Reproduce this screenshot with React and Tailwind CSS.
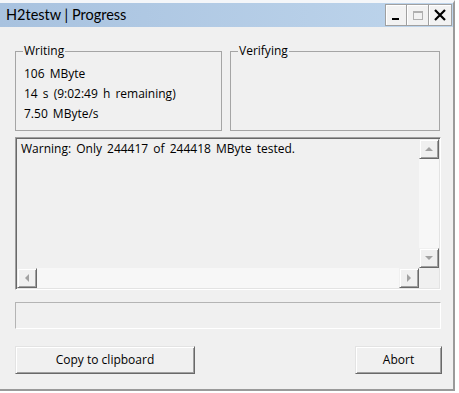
import React from "react";

// small gray triangle used by the scrollbar buttons
const Arrow = ({ dir }) => {
  const pts = {
    up: "0,4 4,0 8,4",
    down: "0,0 8,0 4,4",
    left: "4,0 4,8 0,4",
    right: "0,0 0,8 4,4",
  }[dir];
  const vertical = dir === "up" || dir === "down";
  return (
    <svg width={vertical ? 8 : 4} height={vertical ? 4 : 8} className="block">
      <polygon points={pts} fill="#a2a2a2" />
    </svg>
  );
};

const ScrollButton = ({ dir }) => (
  <div className="w-[20px] h-[20px] flex items-center justify-center bg-[#f0f0f0] border border-t-[#f0f0f0] border-l-[#f0f0f0] border-b-[#696969] border-r-[#696969] shadow-[inset_1px_1px_0_#ffffff,inset_-1px_-1px_0_#a0a0a0]">
    <Arrow dir={dir} />
  </div>
);

const Group = ({ title, className, children }) => (
  <fieldset className={`m-0 h-[88px] border border-[#a5a5a5] pl-[7px] pr-2 ${className}`}>
    <legend className="px-[1px] leading-[16px]">{title}</legend>
    <div className="pl-[1px] pt-[5px] leading-[20px] [word-spacing:2px]">{children}</div>
  </fieldset>
);

const PushButton = ({ label, className }) => (
  <button className={`h-[28px] bg-[#f0f0f0] border border-t-[#e3e3e3] border-l-[#e3e3e3] border-b-[#696969] border-r-[#696969] shadow-[inset_1px_1px_0_#ffffff,inset_-1px_-1px_0_#a0a0a0] text-[12px] ${className}`}>
    {label}
  </button>
);

export default function App() {
  return (
    <div className="w-[459px] h-[393px] bg-white font-['Open_Sans',sans-serif] text-[12px] text-black">
      <div className="w-[455px] h-[391px] flex flex-col bg-[#f0f0f0] border-t-[3px] border-t-[#f4f6f9] border-r-2 border-r-[#9a9a9a] border-b-2 border-b-[#9a9a9a]">
        {/* Title bar */}
        <div className="h-[24px] flex items-center justify-between pl-[6px] pr-[1px] bg-gradient-to-r from-[#a8c2df] to-[#bed5ec]">
          <span className="font-['Lato',sans-serif] text-[14.5px] leading-none pt-[1px]">H2testw | Progress</span>
          <div className="flex h-[22px]">
            <div className="w-[22px] h-[22px] flex items-end justify-start pl-[6px] pb-[5px] bg-[#f2f2f2] border border-[#a0a0a0] shadow-[inset_1px_1px_0_#ffffff]">
              <div className="w-[7px] h-[2px] bg-black" />
            </div>
            <div className="w-[22px] h-[22px] flex items-center justify-center bg-[#f2f2f2] border border-l-0 border-[#a0a0a0] shadow-[inset_1px_1px_0_#ffffff]">
              <div className="w-[10px] h-[9px] border border-t-2 border-[#b0b0b0]" />
            </div>
            <div className="w-[23px] h-[22px] flex items-center justify-center bg-[#f2f2f2] border border-l-0 border-[#a0a0a0] shadow-[inset_1px_1px_0_#ffffff]">
              <svg width="12" height="12" viewBox="0 0 12 12">
                <path d="M1 1 L11 11 M11 1 L1 11" stroke="#000" strokeWidth="2.2" />
              </svg>
            </div>
          </div>
        </div>

        {/* Body */}
        <div className="pl-[15px] pt-[16px] flex flex-col w-[442px]">
          <div className="flex gap-[8px]">
            <Group title="Writing" className="w-[207px]">
              <div>106 MByte</div>
              <div>14 s (9:02:49 h remaining)</div>
              <div>7.50 MByte/s</div>
            </Group>
            <Group title="Verifying" className="w-[210px]" />
          </div>

          {/* Log */}
          <div className="mt-[6px] h-[153px] w-[426px] border border-t-[#a0a0a0] border-l-[#a0a0a0] border-b-white border-r-white shadow-[inset_1px_1px_0_#696969,inset_-1px_-1px_0_#e3e3e3] p-[1px]">
            <div className="h-full grid grid-cols-[1fr_20px] grid-rows-[1fr_20px]">
              <div className="pl-[4px] pt-[1px] leading-[18px] [word-spacing:2px]">
                Warning: Only 244417 of 244418 MByte tested.
              </div>
              <div className="flex flex-col bg-[#f7f7f7]">
                <ScrollButton dir="up" />
                <div className="flex-1" />
                <ScrollButton dir="down" />
              </div>
              <div className="flex bg-[#f7f7f7]">
                <ScrollButton dir="left" />
                <div className="flex-1" />
                <ScrollButton dir="right" />
              </div>
              <div className="bg-[#f0f0f0]" />
            </div>
          </div>

          {/* Progress bar */}
          <div className="mt-[12px] h-[27px] w-[426px] border border-t-[#b4b4b4] border-l-[#b4b4b4] border-b-white border-r-white bg-[#f0f0f0]" />

          {/* Buttons */}
          <div className="mt-[17px] flex justify-between w-[427px]">
            <PushButton label="Copy to clipboard" className="w-[180px]" />
            <PushButton label="Abort" className="w-[87px]" />
          </div>
        </div>
      </div>
    </div>
  );
}
